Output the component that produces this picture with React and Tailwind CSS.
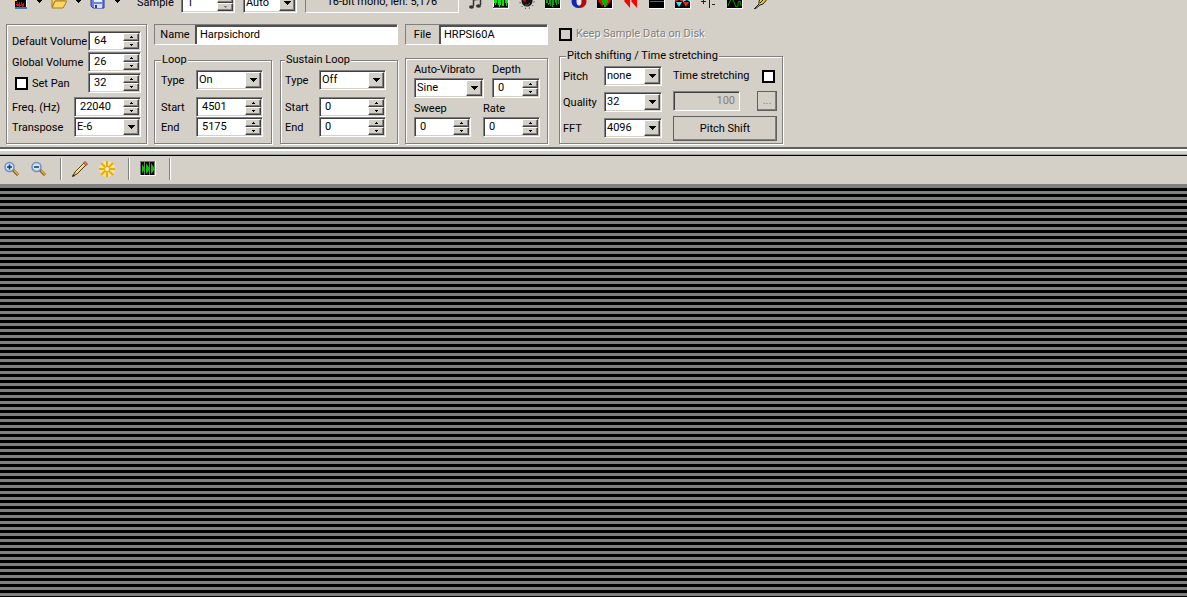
import React from "react";

const sunken =
  "border border-t-[#808080] border-l-[#808080] border-r-white border-b-white shadow-[inset_1px_1px_0_#404040,inset_-1px_-1px_0_#d4d0c8]";
const raised =
  "bg-[#d4cfc7] border border-t-white border-l-white border-r-[#404040] border-b-[#404040] shadow-[inset_-1px_-1px_0_#808080]";
const etched =
  "border border-[#808080] shadow-[1px_1px_0_#fff,inset_1px_1px_0_#fff]";

const Spin = ({ id, value, className, label, disabled }) => (
  <div className={`flex h-5 shrink-0 bg-white p-px ${sunken} ${className}`}>
    <input
      id={id}
      aria-label={label}
      defaultValue={value}
      className="w-0 min-w-0 flex-1 bg-transparent pl-1 outline-none"
    />
    <div className="flex w-4 flex-col">
      <button
        aria-label="Increase"
        className={`flex flex-1 items-center justify-center ${raised}`}
      >
        <svg width="3" height="2" viewBox="0 0 3 2" shapeRendering="crispEdges">
          <path d="M1 0h1v1h1v1H0V1h1z" />
        </svg>
      </button>
      <button
        aria-label="Decrease"
        disabled={disabled}
        className={`flex flex-1 items-center justify-center disabled:text-[#808080] ${raised}`}
      >
        <svg
          width="3"
          height="2"
          viewBox="0 0 3 2"
          fill="currentColor"
          shapeRendering="crispEdges"
        >
          <path d="M0 0h3v1H2v1H1V1H0z" />
        </svg>
      </button>
    </div>
  </div>
);

const Combo = ({ id, value, className, label }) => (
  <div className={`relative h-5 shrink-0 bg-white p-px ${sunken} ${className}`}>
    <select
      id={id}
      aria-label={label}
      defaultValue={value}
      className="block h-full w-full appearance-none bg-transparent pl-px outline-none"
    >
      <option>{value}</option>
    </select>
    <span
      className={`pointer-events-none absolute inset-y-px right-px flex w-4 items-center justify-center ${raised}`}
    >
      <svg width="7" height="4" viewBox="0 0 7 4" shapeRendering="crispEdges">
        <path d="M0 0h7v1H6v1H5v1H4v1H3V3H2V2H1V1H0z" />
      </svg>
    </span>
  </div>
);

const Check = ({ id, dim }) => (
  <input
    id={id}
    type="checkbox"
    className={`h-[13px] w-[13px] shrink-0 appearance-none border-2 border-black ${
      dim ? "bg-[#d4cfc7]" : "bg-white"
    }`}
  />
);

const Field = ({ id, label, children }) => (
  <div className="flex items-center justify-between">
    <label htmlFor={id} className="pt-0.5 whitespace-nowrap">
      {label}
    </label>
    {children}
  </div>
);

const Icon = ({ children }) => (
  <svg width="16" height="16" viewBox="0 0 16 16" aria-hidden="true">
    {children}
  </svg>
);

/* sample tools, left to right */
const tools = [
  {
    name: "Play note",
    art: (
      <>
        <path
          d="M6.500 13V5l7-1v8M6 7l8-1"
          fill="none"
          stroke="#333"
          strokeWidth="1.500"
        />
        <ellipse cx="4.500" cy="14" rx="2.500" ry="1.800" fill="#333" />
        <ellipse cx="11.500" cy="13" rx="2.500" ry="1.800" fill="#333" />
      </>
    ),
  },
  {
    name: "Normalize",
    art: (
      <>
        <path d="M0 0h16v16H0z" fill="#fff" />
        <path d="M1 0h14v15H1z" fill="#000" />
        <path
          d="M1 2h3v8H3v2H2v-2H1zM5 2h3v10H7v2H6v-2H5zM9 2h2v11H9zM12 2h3v8h-1v3h-1v-3h-1z"
          fill="#00e800"
        />
        <path d="M0 14h15v1H0z" fill="red" />
      </>
    ),
  },
  {
    name: "Amplify",
    art: (
      <>
        <circle cx="8" cy="8" r="5.500" fill="#111" />
        <circle cx="5.500" cy="7.500" r="1.500" fill="#c00" />
        <circle
          cx="8"
          cy="8.500"
          r="7"
          fill="none"
          stroke="#111"
          strokeDasharray="1 3"
        />
        <path d="M6 12q3 1 5-2" fill="none" stroke="#666" />
      </>
    ),
  },
  {
    name: "Resample",
    art: (
      <>
        <path d="M0 0h16v16H0z" fill="#fff" />
        <path d="M0 0h15v15H0z" fill="#000" />
        <path
          d="M1 6h2v4h1V5h2v8H5v-2H4v1H3v-2H1zM7 4h2v8H8v2H7zM10 5h2v7h-1v-2h-1zM13 4h1v7h-1z"
          fill="#00a800"
        />
      </>
    ),
  },
  {
    name: "Invert phase",
    art: (
      <>
        <path d="M7 2A6 6 0 0 0 7 15Q11 15 9 13 6 8 9 4z" fill="#1226b0" />
        <path d="M9 2A6 6 0 0 1 9 15Q7 14 9 12 11 8 8 4z" fill="#b00c0c" />
        <ellipse cx="8" cy="8" rx="2.500" ry="4.500" fill="#e8e8f8" />
      </>
    ),
  },
  {
    name: "Crossfade loop",
    art: (
      <>
        <path d="M0 0h16v16H0z" fill="#fff" />
        <path d="M0 0h15v15H0z" fill="#000" />
        <path d="M1 8l5-6v12zM14 8L9 2v12z" fill="red" />
        <path d="M5 5h6v5h-1v2H9v2H7v-2H6v-2H5z" fill="#00b800" />
      </>
    ),
  },
  {
    name: "Reverse",
    art: <path d="M1 8l6-7v14zM8 8l6-7v14z" fill="red" />,
  },
  {
    name: "Silence",
    art: (
      <>
        <path d="M0 0h16v16H0z" fill="#fff" />
        <path d="M0 0h15v15H0z" fill="#000" />
        <path d="M1 8h14v1H1z" fill="#00a800" />
      </>
    ),
  },
  {
    name: "Swap channels",
    art: (
      <>
        <path d="M0 0h16v16H0z" fill="#fff" />
        <path d="M0 0h15v15H0z" fill="#000" />
        <path d="M1 9h6l-3 5zM8 4h7v5l-3-2-4 2z" fill="#3ee" />
        <path d="M8 9h6l-3 5zM0 4h8v5L4 7 0 9z" fill="#e22" />
      </>
    ),
  },
  {
    name: "Sign",
    art: (
      <path
        d="M0 8.500h5M2.500 6v5M8.500 2v13M10 5.500h4M11 11.500h3"
        fill="none"
        stroke="#222"
      />
    ),
  },
  {
    name: "Autotune",
    art: (
      <>
        <path d="M0 0h16v16H0z" fill="#fff" />
        <path d="M0 0h15v15H0z" fill="#000" />
        <path
          d="M1 13l2-5 2-3 2 4 2 5 2-1V9l2-1 1 5"
          fill="none"
          stroke="#00a800"
        />
      </>
    ),
  },
  {
    name: "Draw",
    art: (
      <>
        <path d="M1 16l5-5V8l7-7 3 3-6 7-3 1-5 4z" fill="#e8c92a" stroke="#222" />
        <path d="M7 10l5-5" stroke="#222" />
      </>
    ),
  },
];

const DropArrow = ({ label }) => (
  <button
    aria-label={label}
    className="flex h-4 w-[15px] items-center justify-center"
  >
    <svg width="5" height="3" viewBox="0 0 5 3" shapeRendering="crispEdges">
      <path d="M0 0h5v1H4v1H3v1H2V2H1V1H0z" />
    </svg>
  </button>
);

const TopBar = () => (
  <div className="flex h-[13px] items-end overflow-hidden">
    <div className="flex pb-1 pl-3">
      <button aria-label="New sample">
        <Icon>
          <path d="M3 2h12v14H3z" fill="#fff" />
          <path d="M3 6h11v9H3z" fill="#000" />
          <path d="M2 7h3v1H2z" fill="#fc3" />
          <path
            d="M4 11h1V9h1v2h1V9h1v3h1V9h1v2h1v-1h1v3h-1v1h-1v-1H8v1H7v-1H5v-1H4z"
            fill="red"
          />
          <path d="M3 14h12v2H3z" fill="#47a" />
        </Icon>
      </button>
      <div className="ml-1">
        <DropArrow label="New sample options" />
      </div>
      <button aria-label="Open sample" className="ml-1">
        <Icon>
          <path d="M1 4h12v4H4l-3 6z" fill="#f5d77a" stroke="#a67c1a" />
          <path d="M4 8h12l-4 7H1z" fill="#fbd663" stroke="#a67c1a" />
        </Icon>
      </button>
      <div className="ml-1">
        <DropArrow label="Open sample options" />
      </div>
      <button aria-label="Save sample" className="ml-1">
        <Icon>
          <path d="M1 1h13v14H3l-2-2z" fill="#6c86e0" stroke="#26389c" />
          <path d="M4 1h8v8H4z" fill="#e8eefc" />
          <path d="M4 11h8v4H4z" fill="#dde" />
          <path d="M5 12h2v3H5z" fill="#26389c" />
        </Icon>
      </button>
      <div className="ml-1">
        <DropArrow label="Save sample options" />
      </div>
    </div>
    <label htmlFor="sample" className="ml-3 w-9 pb-0.5 leading-4">
      Sample
    </label>
    <div className="ml-2">
      <Spin id="sample" value="1" className="w-[54px]" disabled />
    </div>
    <div className="ml-2">
      <Combo label="Zoom" value="Auto" className="w-[54px]" />
    </div>
    <div className="ml-2 w-[154px] border border-t-[#808080] border-l-[#808080] border-r-white border-b-white pb-0.5 text-center leading-4">
      16-bit mono, len: 5,176
    </div>
    <div className="ml-2 flex gap-2.5 pb-1">
      {tools.map((tool) => (
        <button key={tool.name} aria-label={tool.name}>
          <Icon>{tool.art}</Icon>
        </button>
      ))}
    </div>
  </div>
);

const NameBox = ({ id, label, value, labelClass }) => (
  <div className="flex h-[21px] border border-t-[#808080] border-l-[#808080] border-r-white border-b-white">
    <label
      htmlFor={id}
      className={`shrink-0 text-center leading-5 ${labelClass}`}
    >
      {label}
    </label>
    <input
      id={id}
      defaultValue={value}
      className="min-w-0 flex-1 border-t-2 border-l-2 border-[#505050] bg-white pb-0.5 pl-[3px] outline-none"
    />
  </div>
);

const LoopGroup = ({ id, title, type, start, end, className }) => (
  <fieldset className={`h-[91px] w-[118px] pt-[3px] ${etched} ${className}`}>
    <legend className="bg-[#d4cfc7] px-px leading-[14px]">{title}</legend>
    <Field id={`${id}-type`} label="Type">
      <Combo id={`${id}-type`} value={type} className="w-[67px]" />
    </Field>
    <div className="mt-[7px]">
      <Field id={`${id}-start`} label="Start">
        <Spin id={`${id}-start`} value={start} className="w-[67px]" />
      </Field>
      <Field id={`${id}-end`} label="End">
        <Spin id={`${id}-end`} value={end} className="w-[67px]" />
      </Field>
    </div>
  </fieldset>
);

const Separator = () => (
  <span className="h-[22px] w-0.5 border-r border-l border-r-white border-l-[#808080]"></span>
);

export default function App() {
  return (
    <div className="flex min-h-screen w-full flex-col bg-[#d4cfc7] font-['Roboto','Liberation_Sans',sans-serif] text-[11px] leading-4 text-black">
      <TopBar />

      {/* sample properties */}
      <div className="flex gap-[7px] px-[6px] pt-[11px] pb-[3px]">
        <div
          className={`flex h-[120px] w-[141px] shrink-0 flex-col gap-px px-[5px] pt-[6px] ${etched}`}
        >
          <Field id="defvol" label="Default Volume">
            <Spin id="defvol" value="64" className="w-[53px]" />
          </Field>
          <Field id="globvol" label="Global Volume">
            <Spin id="globvol" value="26" className="w-[53px]" />
          </Field>
          <div className="flex items-center pl-[3px]">
            <Check id="setpan" />
            <label htmlFor="setpan" className="pt-0.5 pl-1">
              Set Pan
            </label>
            <div className="ml-auto">
              <Spin label="Pan" value="32" className="w-[53px]" />
            </div>
          </div>
          <div className="mt-[3px]">
            <Field id="freq" label="Freq. (Hz)">
              <Spin id="freq" value="22040" className="w-[67px]" />
            </Field>
            <Field id="transpose" label="Transpose">
              <Combo id="transpose" value="E-6" className="w-[67px]" />
            </Field>
          </div>
        </div>

        <div className="flex w-[244px] shrink-0 flex-col justify-between">
          <NameBox
            id="name"
            label="Name"
            value="Harpsichord"
            labelClass="w-10"
          />
          <div className="flex justify-between">
            <LoopGroup
              id="loop"
              title="Loop"
              type="On"
              start="4501"
              end="5175"
              className="pr-2 pl-[6px]"
            />
            <LoopGroup
              id="sus"
              title="Sustain Loop"
              type="Off"
              start="0"
              end="0"
              className="pr-[11px] pl-1"
            />
          </div>
        </div>

        <div className="flex w-[143px] shrink-0 flex-col justify-between">
          <NameBox
            id="file"
            label="File"
            value="HRPSI60A"
            labelClass="w-[33px]"
          />
          <div className={`h-[86px] px-2 pt-[3px] ${etched}`}>
            <div className="flex gap-2">
              <div className="flex w-[70px] flex-col">
                <label htmlFor="vibrato">Auto-Vibrato</label>
                <Combo id="vibrato" value="Sine" className="w-[70px]" />
              </div>
              <div className="flex flex-col">
                <label htmlFor="depth">Depth</label>
                <Spin id="depth" value="0" className="w-[48px]" />
              </div>
            </div>
            <div className="mt-[3px] flex gap-3">
              <div className="flex flex-col">
                <label htmlFor="sweep">Sweep</label>
                <Spin id="sweep" value="0" className="w-[57px]" />
              </div>
              <div className="flex flex-col">
                <label htmlFor="rate">Rate</label>
                <Spin id="rate" value="0" className="w-[57px]" />
              </div>
            </div>
          </div>
        </div>

        <div className="ml-1 flex w-[224px] shrink-0 flex-col justify-between">
          <div className="flex h-5 items-center gap-1">
            <Check id="keep" dim />
            <label
              htmlFor="keep"
              className="text-[#808080] [text-shadow:1px_1px_0_#fff]"
            >
              Keep Sample Data on Disk
            </label>
          </div>
          <fieldset
            className={`flex h-[95px] justify-between pr-[5px] pl-[3px] ${etched}`}
          >
            <legend className="ml-[3px] bg-[#d4cfc7] px-px leading-[14px]">
              Pitch shifting / Time stretching
            </legend>
            <div className="flex w-[99px] flex-col gap-[6px] pt-[3px]">
              <Field id="pitch" label="Pitch">
                <Combo id="pitch" value="none" className="w-[58px]" />
              </Field>
              <Field id="quality" label="Quality">
                <Combo id="quality" value="32" className="w-[58px]" />
              </Field>
              <Field id="fft" label="FFT">
                <Combo id="fft" value="4096" className="w-[58px]" />
              </Field>
            </div>
            <div className="flex w-[104px] flex-col gap-[5px] pt-[3px]">
              <div className="flex h-5 items-center justify-between pr-0.5">
                <label htmlFor="stretch">Time stretching</label>
                <Check id="stretch" />
              </div>
              <div className="flex h-5 justify-between">
                <input
                  aria-label="Stretch ratio"
                  disabled
                  defaultValue="100"
                  className={`w-[67px] pr-1 text-right text-[#808080] ${sunken}`}
                />
                <button
                  disabled
                  className={`w-5 text-[#808080] outline outline-1 -outline-offset-1 outline-[#606060] ${raised}`}
                >
                  ...
                </button>
              </div>
              <button
                className={`h-[25px] w-full outline outline-1 -outline-offset-1 outline-[#606060] ${raised}`}
              >
                Pitch Shift
              </button>
            </div>
          </fieldset>
        </div>
      </div>

      {/* splitter */}
      <div className="h-[9px] border-t-2 border-b border-t-[#606060] border-b-black">
        <div className="h-full border-t-2 border-b border-t-white border-b-[#a0a0a0]"></div>
      </div>

      {/* view toolbar */}
      <div className="flex h-7 items-center pb-0.5 pl-1">
        <button aria-label="Zoom in">
          <Icon>
            <path d="M9 9l5 5" stroke="#7a5a20" strokeWidth="3" />
            <path d="M10 9.500l4 4" stroke="#f0b830" strokeWidth="1.500" />
            <circle
              cx="5.500"
              cy="6"
              r="4.500"
              fill="#cfe4fa"
              stroke="#6f8fb8"
              strokeWidth="1.500"
            />
            <path d="M3 6h5M5.500 3.500v5" stroke="#123a78" strokeWidth="1.500" />
          </Icon>
        </button>
        <button aria-label="Zoom out" className="ml-[11px]">
          <Icon>
            <path d="M9 9l5 5" stroke="#7a5a20" strokeWidth="3" />
            <path d="M10 9.500l4 4" stroke="#f0b830" strokeWidth="1.500" />
            <circle
              cx="5.500"
              cy="6"
              r="4.500"
              fill="#cfe4fa"
              stroke="#6f8fb8"
              strokeWidth="1.500"
            />
            <path d="M3 6h5" stroke="#123a78" strokeWidth="1.500" />
          </Icon>
        </button>
        <div className="ml-[13px] flex items-center gap-[10px]">
          <Separator />
          <button aria-label="Pencil">
            <Icon>
              <path d="M1 15l2-4 9-9 2 2-9 9z" fill="#f3d573" stroke="#4a3a1a" />
              <path d="M4 11l8-8" stroke="#fff3b8" />
              <path
                d="M11.500 2L13 .500 15.500 3 14 4.500z"
                fill="#e88a80"
                stroke="#a04038"
              />
              <path d="M0 16l1-3 2 2z" fill="#222" />
            </Icon>
          </button>
          <button aria-label="Generate">
            <svg width="18" height="18" viewBox="0 0 18 18" aria-hidden="true">
              <circle cx="9" cy="9" r="8" fill="#fdf08a" opacity="0.7" />
              <path
                d="M9 1v16M1 9h16M3 3l12 12M15 3L3 15"
                stroke="#eda80c"
                strokeWidth="2"
              />
              <circle cx="9" cy="9" r="2" fill="#fff9cc" />
            </svg>
          </button>
        </div>
        <div className="ml-3 flex items-center gap-[10px]">
          <Separator />
          <button aria-label="Show waveform">
            <svg width="16" height="16" viewBox="0 0 16 16" aria-hidden="true">
              <path d="M0 0h16v15H0z" fill="#fff" />
              <path d="M0 0h15v14H0z" fill="#777" />
              <path d="M1 1h3v13H1zM5 1h4v13H5zM10 1h4v13h-4z" fill="#000" />
              <path
                d="M2 3l3 5-3 4zM6 2l4 6-4 5zM11 2l4 6-4 5z"
                fill="#00c800"
              />
            </svg>
          </button>
          <span className="ml-[3px] flex">
            <Separator />
          </span>
        </div>
      </div>

      {/* sample display */}
      <div className="flex-1 border-t border-[#808080] bg-[repeating-linear-gradient(to_bottom,#808080_0px,#808080_3px,#000_3px,#000_6px)] bg-origin-padding"></div>
    </div>
  );
}
